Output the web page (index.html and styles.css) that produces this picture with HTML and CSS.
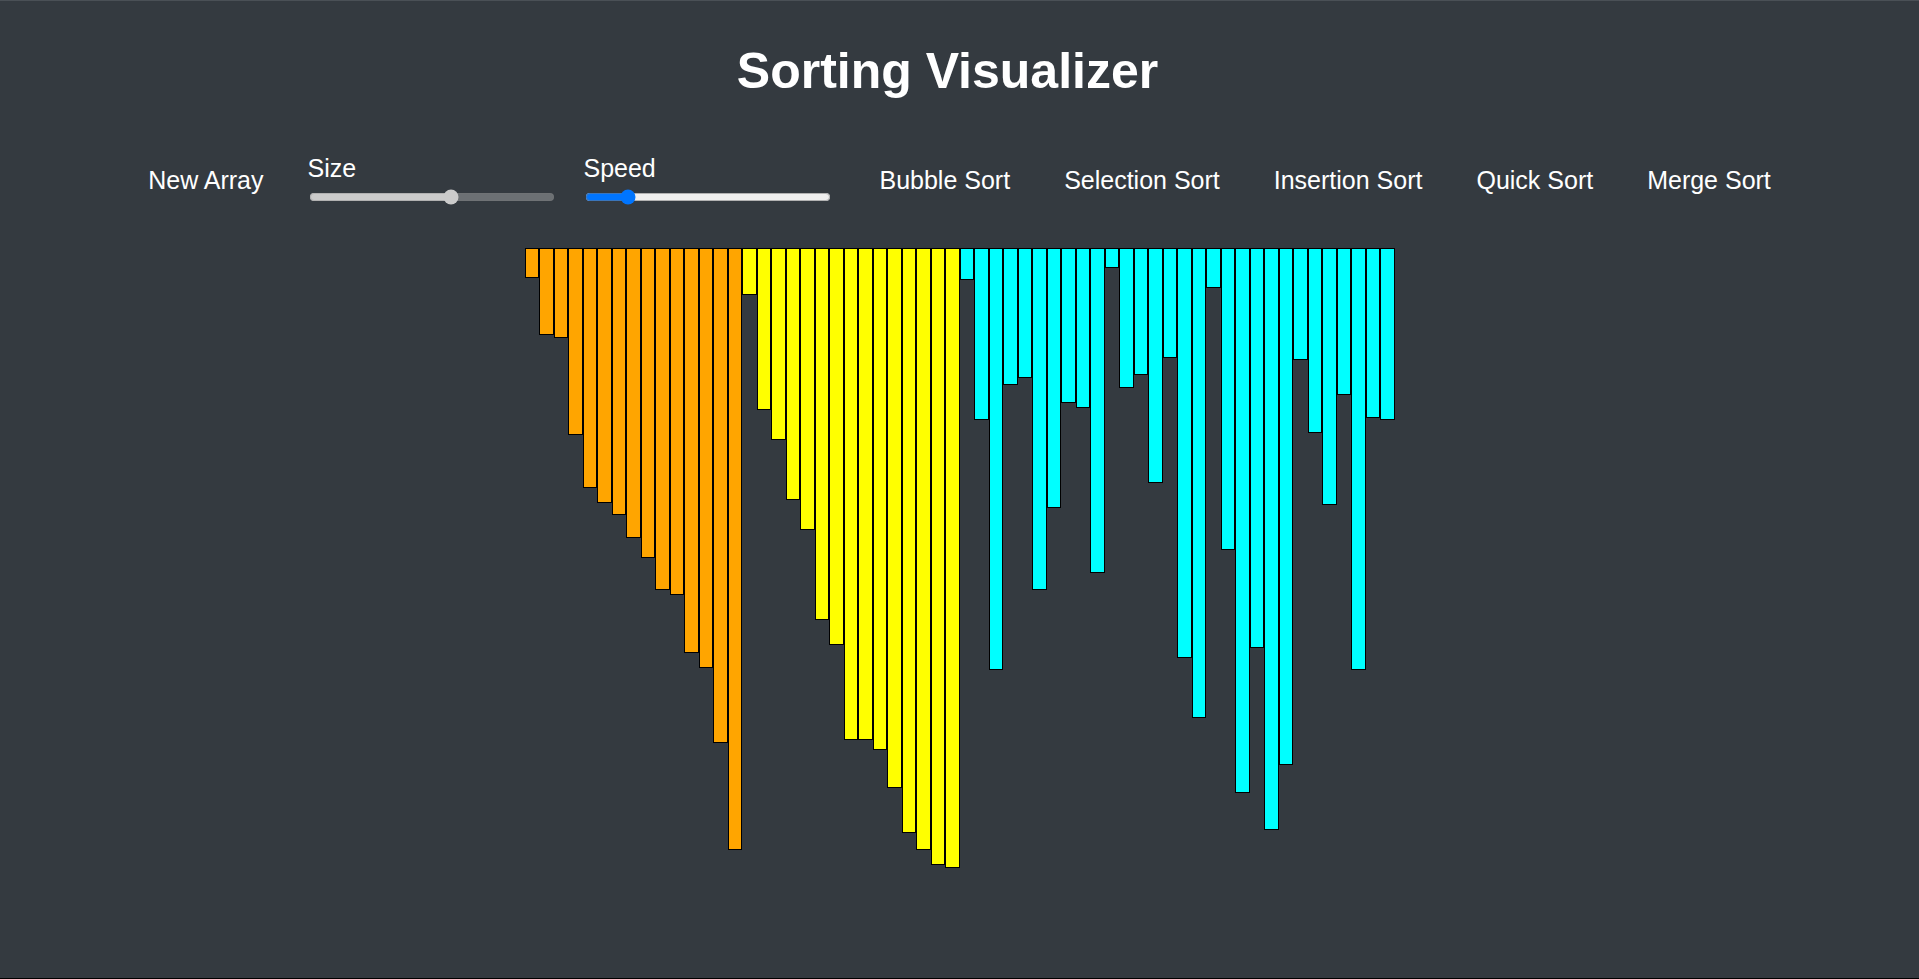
FILE: index.html
```html
<!DOCTYPE html>
<html lang="en">

<head>
    <meta charset="UTF-8">
    <meta name="viewport" content="width=device-width, initial-scale=1.0">
    <title>Sorting Visualizer</title>
    <link rel="stylesheet" href="styles.css">
</head>

<body>
    <div class="app">
        <h1 class="title">Sorting Visualizer</h1>

        <div class="controls">
            <button class="control-btn">New Array</button>
            <div class="slider-group">
                <label for="size">Size</label>
                <input type="range" id="size" min="5" max="100" value="60" disabled>
            </div>
            <div class="slider-group">
                <label for="speed">Speed</label>
                <input type="range" id="speed" min="1" max="100" value="16">
            </div>
            <button class="control-btn">Bubble Sort</button>
            <button class="control-btn">Selection Sort</button>
            <button class="control-btn">Insertion Sort</button>
            <button class="control-btn">Quick Sort</button>
            <button class="control-btn">Merge Sort</button>
        </div>

        <div id="bars" class="bars"></div>
    </div>

    <script>
        // heights of the array as it is while merge sort runs
        const heights = [
            30, 87, 90, 187, 240, 255, 267, 290, 310, 342, 347, 405, 420, 495, 602,
            47, 162, 192, 252, 282, 372, 397, 492, 492, 502, 540, 585, 602, 617, 620,
            32, 172, 422, 137, 130, 342, 260, 155, 160, 325, 20, 140, 127, 235, 110,
            410, 470, 40, 302, 545, 400, 582, 517, 112, 185, 257, 147, 422, 170, 172
        ];

        const bars = document.getElementById("bars");

        heights.forEach((h, i) => {
            let bar = document.createElement("div");
            bar.className = "bar";
            if (i < 15) {
                bar.classList.add("bar-left");
            } else if (i < 30) {
                bar.classList.add("bar-right");
            } else {
                bar.classList.add("bar-idle");
            }
            bar.style.height = h + "px";
            bars.appendChild(bar);
        });
    </script>

</body>

</html>
```

FILE: styles.css
```css
body {
    margin: 0;
    font-family: "Liberation Sans", Arial, sans-serif;
    background-color: #343a40;
    color: white;
}

.app {
    height: 979px;
    box-sizing: border-box;
    border-top: 1px solid #4a5056;
    border-bottom: 1px solid #000;
}

.title {
    margin: 41px 0 0 0;
    padding-right: 24px;
    font-size: 50px;
    font-weight: bold;
    text-align: center;
}

.controls {
    display: flex;
    justify-content: center;
    align-items: center;
    margin-top: 54px;
}

.control-btn {
    background: none;
    border: none;
    color: white;
    font-family: "Liberation Sans", Arial, sans-serif;
    font-size: 25px;
    padding: 0 27px;
    cursor: pointer;
}

.slider-group {
    display: flex;
    flex-direction: column;
    align-items: flex-start;
    margin-left: 17px;
    font-size: 25px;
}

.slider-group + .slider-group {
    margin-left: 26px;
}

.slider-group + .control-btn {
    margin-left: 19px;
}

.slider-group input {
    width: 246px;
    margin: 6px 2px 2px 2px;
}

.bars {
    display: flex;
    justify-content: center;
    align-items: flex-start;
    margin-top: 41px;
}

.bar {
    width: 14.5px;
    box-sizing: border-box;
    border: 1px solid black;
}

.bar-left {
    background-color: orange;
}

.bar-right {
    background-color: yellow;
}

.bar-idle {
    background-color: aqua;
}
```
